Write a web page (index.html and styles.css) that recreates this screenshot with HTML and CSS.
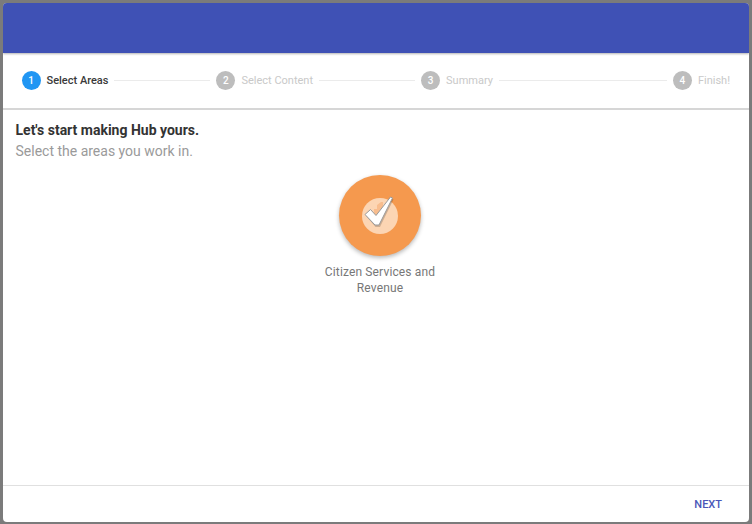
FILE: index.html
```html
<!DOCTYPE html>
<html lang="en">
<head>
<meta charset="utf-8">
<title>Select Areas</title>
<link rel="stylesheet" href="styles.css">
</head>
<body>
<div class="dialog">
  <header class="banner"></header>
  <nav class="stepper">
    <span class="badge badge-active">1</span><span class="label label-active">Select Areas</span>
    <span class="line"></span>
    <span class="badge">2</span><span class="label">Select Content</span>
    <span class="line"></span>
    <span class="badge">3</span><span class="label">Summary</span>
    <span class="line line-long"></span>
    <span class="badge">4</span><span class="label">Finish!</span>
  </nav>
  <main class="content">
    <h1 class="title">Let's start making Hub yours.</h1>
    <p class="subtitle">Select the areas you work in.</p>
    <div class="areas">
      <div class="area">
        <div class="tile">
          <span class="tile-inner"></span>
          <svg class="check" viewBox="0 0 36 36" width="36" height="36" aria-hidden="true">
            <path class="building" d="M12 14 L15 14 L15 10 L19 7 L21 7 L21 12 L17 20 L12 20 Z"/>
            <path class="check-shadow" d="M4 21 L9.5 16.5 L15 23.5 L29.5 3.5 L31.5 4.5 L18 32 L13.5 32 Z"/>
            <path class="check-mark" d="M3 19.5 L8.5 14.5 L14 20.5 L28.5 2 L30.5 3 L17 30 L13 30 Z"/>
          </svg>
        </div>
        <div class="area-name">Citizen Services and Revenue</div>
      </div>
    </div>
  </main>
  <footer class="actions"><span class="next">NEXT</span></footer>
</div>
</body>
</html>
```
FILE: styles.css
```css
* { box-sizing: border-box; }
html, body { height: 100%; }
body {
  margin: 0;
  padding: 3px;
  background: #7b7b7b;
  font-family: Roboto, "Liberation Sans", sans-serif;
  overflow: hidden;
}
.dialog {
  height: 519px;
  background: #fff;
  border-radius: 4px;
  overflow: hidden;
  display: flex;
  flex-direction: column;
}
.banner {
  height: 50px;
  flex: none;
  background: #3f51b5;
  box-shadow: 0 1px 2px rgba(0, 0, 0, .3);
}
.stepper {
  height: 57px;
  flex: none;
  display: flex;
  align-items: center;
  padding: 0 19px 0 18.5px;
  border-bottom: 2px solid #d6d6d6;
}
.badge {
  width: 19px;
  height: 19px;
  flex: none;
  border-radius: 50%;
  background: #bdbdbd;
  color: #fff;
  font-size: 10px;
  font-weight: 500;
  line-height: 19px;
  text-align: center;
}
.badge-active { background: #2196f3; }
.label {
  margin-left: 6px;
  font-size: 11px;
  line-height: 16px;
  color: #c9c9c9;
  white-space: nowrap;
}
.label-active { color: #3a3a3a; font-weight: 500; }
.line {
  flex: 96 1 0;
  height: 1px;
  margin: 0 6px;
  background: #ebebeb;
}
.line-long { flex-grow: 168; }
.content {
  flex: 1;
  padding: 11px 12.5px 0;
}
.title {
  margin: 0;
  font-size: 14px;
  line-height: 18px;
  font-weight: 700;
  color: #333;
}
.subtitle {
  margin: 3px 0 0;
  font-size: 14px;
  line-height: 18px;
  color: #9a9a9a;
}
.areas {
  display: flex;
  justify-content: center;
  margin-top: 15px;
  padding-left: 8px;
}
.area {
  width: 130px;
  display: flex;
  flex-direction: column;
  align-items: center;
}
.tile {
  position: relative;
  width: 82px;
  height: 81px;
  border-radius: 50%;
  background: #f5994e;
  box-shadow: 0 2px 4px rgba(0, 0, 0, .28);
  display: flex;
  align-items: center;
  justify-content: center;
}
.tile-inner {
  width: 36px;
  height: 36px;
  border-radius: 50%;
  background: #fcd5b3;
}
.check {
  position: absolute;
  left: 23px;
  top: 20px;
}
.building { fill: #f8bd8e; }
.check-mark { fill: #fff; stroke: #9a9a9a; stroke-width: 1; stroke-linejoin: round; }
.check-shadow { fill: rgba(0, 0, 0, .18); }
.area-name {
  margin-top: 9px;
  font-size: 12px;
  line-height: 15.5px;
  letter-spacing: .14px;
  color: #777;
  text-align: center;
}
.actions {
  height: 37px;
  flex: none;
  border-top: 1px solid #e0e0e0;
  display: flex;
  align-items: center;
  justify-content: flex-end;
  padding: 0 27px 0 0;
}
.next {
  font-size: 11px;
  font-weight: 500;
  color: #4a57b8;
}
```
